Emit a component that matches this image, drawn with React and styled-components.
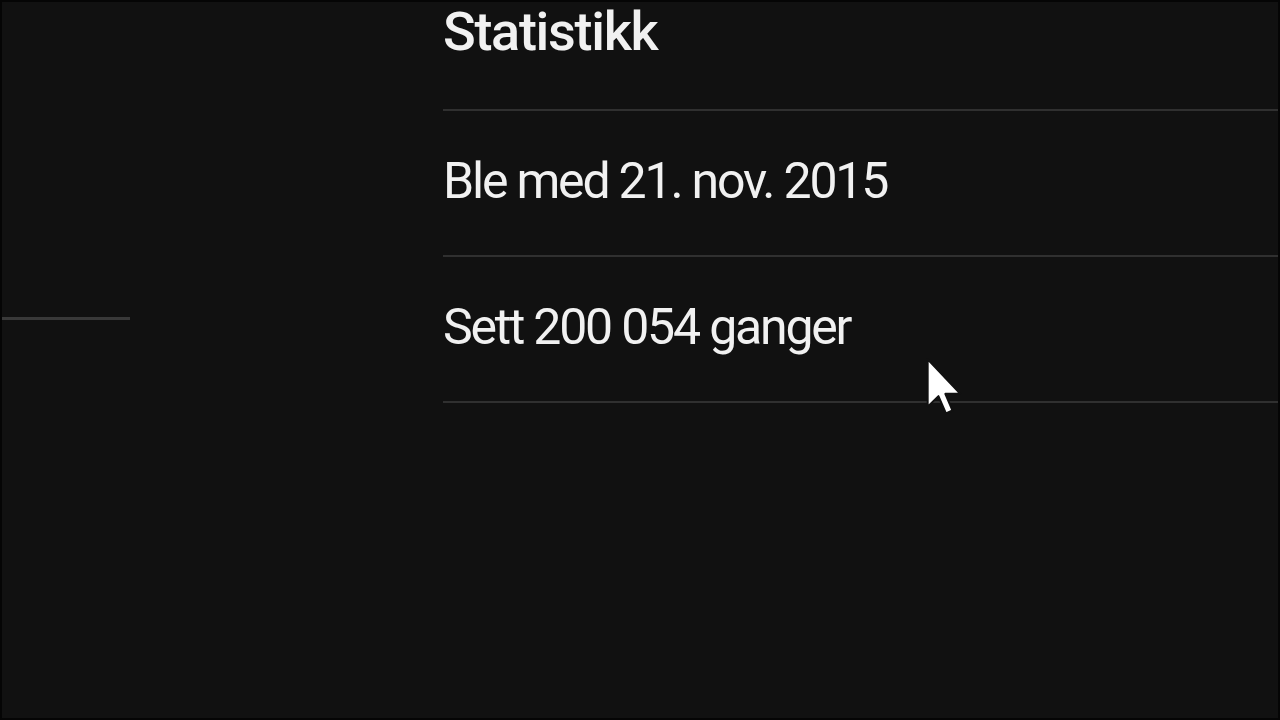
import React from "react";
import styled, { createGlobalStyle } from "styled-components";

const GlobalStyle = createGlobalStyle`
  html, body {
    margin: 0;
    padding: 0;
    background: #000;
  }
  body {
    font-family: Roboto, "Noto Sans", Arial, sans-serif;
  }
`;

const Frame = styled.div`
  position: relative;
  width: 1280px;
  height: 720px;
  box-sizing: border-box;
  border: 2px solid #050505;
  background: #111111;
  overflow: hidden;
  display: grid;
  grid-template-columns: 441px 1fr;
`;

const SideColumn = styled.div`
  padding-top: 315px;
`;

const SideRule = styled.div`
  width: 128px;
  height: 3px;
  background: #393939;
`;

const Stats = styled.section`
  display: flex;
  flex-direction: column;
`;

const Heading = styled.h2`
  margin: -2px 0 0;
  padding-bottom: 46px;
  font-size: 54px;
  font-weight: 500;
  line-height: 63px;
  letter-spacing: -1.3px;
  color: #f1f1f1;
  border-bottom: 2px solid #303030;
`;

const Row = styled.div`
  padding: 41px 0 45px;
  font-size: 50px;
  line-height: 58px;
  font-weight: 400;
  letter-spacing: -2.2px;
  color: #f1f1f1;
  border-bottom: 2px solid #303030;
`;

const Cursor = styled.svg`
  position: absolute;
  left: 922px;
  top: 354px;
  width: 40px;
  height: 62px;
`;

export default function App() {
  return (
    <>
      <GlobalStyle />
      <Frame>
        <SideColumn>
          <SideRule />
        </SideColumn>
        <Stats>
          <Heading>Statistikk</Heading>
          <Row>Ble med 21. nov. 2015</Row>
          <Row>Sett 200 054 ganger</Row>
        </Stats>
        <Cursor viewBox="0 0 12 19">
          <path
            d="M1 1 L1 15.5 L4.3 12.3 L6.6 17.6 L8.6 16.7 L6.4 11.6 L11 11.6 Z"
            fill="#ffffff"
            stroke="#111"
            strokeWidth="0.6"
            strokeLinejoin="round"
          />
        </Cursor>
      </Frame>
    </>
  );
}
